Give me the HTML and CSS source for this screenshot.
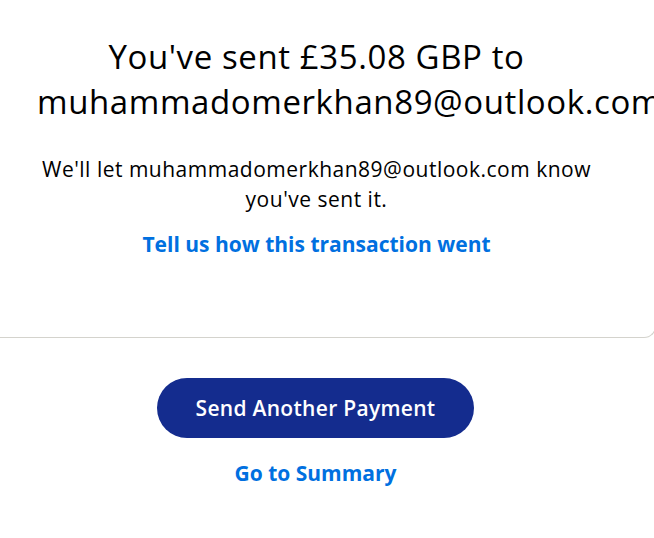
FILE: index.html
```html
<!DOCTYPE html>
<html lang="en">
<head>
<meta charset="utf-8">
<title>Payment sent</title>
<link rel="stylesheet" href="styles.css">
</head>
<body>
<section class="card">
  <div class="content">
    <h1 class="title">You've sent £35.08 GBP to muhammadomerkhan89@outlook.com</h1>
    <p class="note">We'll let muhammadomerkhan89@outlook.com know you've sent it.</p>
    <a class="link feedback" href="#">Tell us how this transaction went</a>
  </div>
</section>
<div class="actions">
  <a class="btn" href="#">Send Another Payment</a>
  <a class="link" href="#">Go to Summary</a>
</div>
</body>
</html>
```

FILE: styles.css
```css
html, body {
  margin: 0;
  padding: 0;
  background: #ffffff;
}
body {
  font-family: "Open Sans", "Noto Sans", sans-serif;
  color: #000000;
  width: 654px;
  overflow: hidden;
}
.card {
  margin: 0 -2px 0 -40px;
  border: 1px solid #d4d3cd;
  border-top: none;
  border-radius: 0 0 12px 12px;
  padding: 34px 0 79px;
}
.content {
  width: 559px;
  margin-left: 76px;
  display: flex;
  flex-direction: column;
  align-items: center;
  text-align: center;
}
.title {
  margin: 0;
  font-size: 33px;
  line-height: 45px;
  font-weight: 400;
  letter-spacing: 0.6px;
  align-self: stretch;
}
.note {
  margin: 30px 0 0;
  font-size: 21px;
  line-height: 30px;
  letter-spacing: 0.5px;
}
.link {
  color: #0070e0;
  font-weight: 700;
  font-size: 21px;
  line-height: 28px;
  text-decoration: none;
}
.feedback {
  margin-top: 16px;
}
.actions {
  width: 559px;
  margin-left: 36px;
  padding-top: 40px;
  display: flex;
  flex-direction: column;
  align-items: center;
  gap: 21px;
}
.btn {
  display: flex;
  align-items: center;
  justify-content: center;
  width: 317px;
  height: 60px;
  border-radius: 30px;
  background: #142c8e;
  color: #ffffff;
  font-size: 21px;
  font-weight: 600;
  letter-spacing: 0.3px;
  text-decoration: none;
}
```
